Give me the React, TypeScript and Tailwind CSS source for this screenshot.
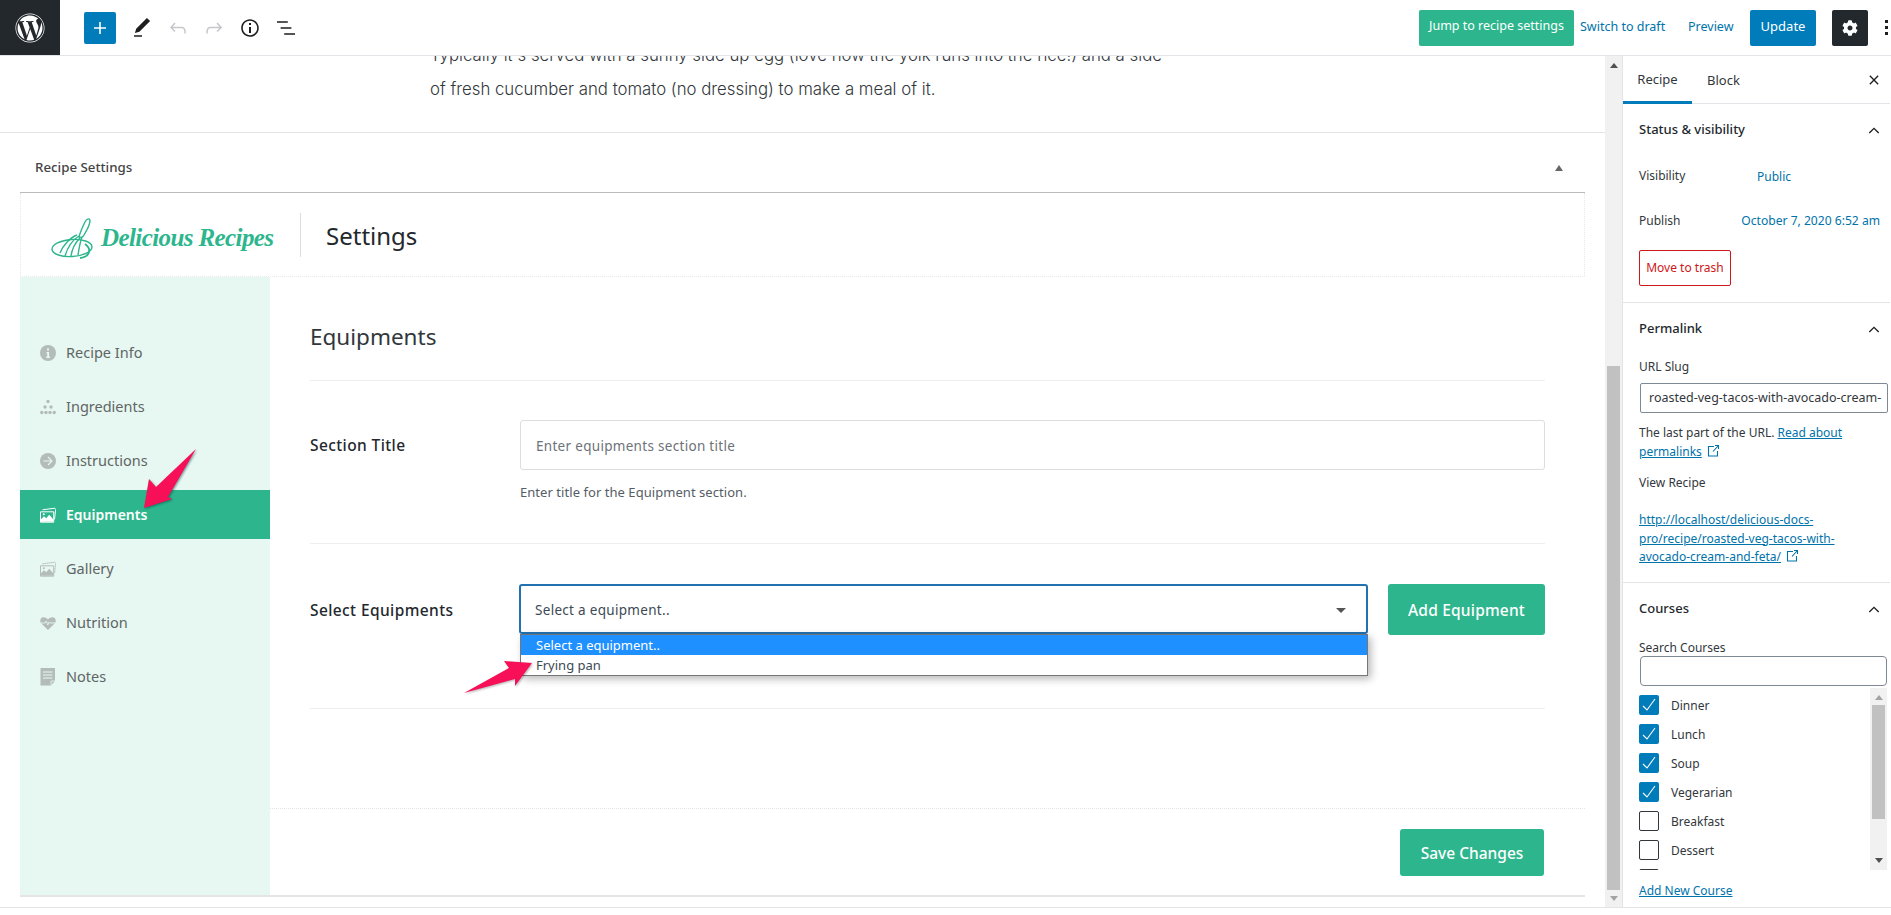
import { FaWordpress, FaCog } from 'react-icons/fa';

const uiFont = "font-['Noto_Sans','Open_Sans',sans-serif]";

function WpIcon({ d, className }: { d: string; className?: string }) {
  return (
    <svg viewBox="0 0 24 24" width="24" height="24" fill="currentColor" className={className}>
      <path d={d} />
    </svg>
  );
}

function ChevronUp() {
  return (
    <svg viewBox="0 0 14 8" width="12" height="7" fill="none" stroke="#1e1e1e" strokeWidth="1.6">
      <path d="M1.5 7 7 1.5 12.5 7" />
    </svg>
  );
}

function ExternalIcon() {
  return (
    <svg viewBox="0 0 14 14" width="14" height="14" fill="none" stroke="#0073aa" strokeWidth="1.1" className="inline-block ml-1 -mt-1">
      <path d="M8 2.5H2.5v9.5h9V7M7 7.5 12.5 1.5M9 1.5h3.5V5" />
    </svg>
  );
}

function NavIcon({ name, active }: { name: string; active?: boolean }) {
  const c = active ? '#ffffff' : '#b4bcb9';
  const bg = active ? '#2db68d' : '#e7f7f2';
  if (name === 'info')
    return (
      <svg viewBox="0 0 16 16" width="16" height="16">
        <circle cx="8" cy="8" r="8" fill={c} />
        <path d="M7 3.5h2v2H7zM6.5 7h2.6v4.6h.8V13H6.3v-1.4h.9V8.3h-.7z" fill={bg} />
      </svg>
    );
  if (name === 'dots')
    return (
      <svg viewBox="0 0 16 16" width="16" height="16" fill={c}>
        <circle cx="8" cy="2.5" r="1.7" />
        <circle cx="5" cy="8" r="1.7" />
        <circle cx="11" cy="8" r="1.7" />
        <circle cx="1.8" cy="13.5" r="1.7" />
        <circle cx="6" cy="13.5" r="1.7" />
        <circle cx="10" cy="13.5" r="1.7" />
        <circle cx="14.2" cy="13.5" r="1.7" />
      </svg>
    );
  if (name === 'arrow')
    return (
      <svg viewBox="0 0 16 16" width="16" height="16">
        <circle cx="8" cy="8" r="8" fill={c} />
        <path d="M3.5 8h8M8 4l4 4-4 4" fill="none" stroke={bg} strokeWidth="1.1" />
      </svg>
    );
  if (name === 'photo')
    return (
      <svg viewBox="0 0 16 16" width="16" height="16">
        <path d="M2.5 2.8 14.8 1.2l.9 1.2-1.2 10" fill="none" stroke={c} strokeWidth="1" strokeDasharray={active ? undefined : '1.5 .5'} />
        <path d="M.5 4.8h13.2v10.4H.5z" fill="none" stroke={c} strokeWidth="1" />
        <path d="M1 14.8v-2.6l3-3 2.2 2 3-3.4 4 4.5v2.5z" fill={c} />
        <circle cx="3.8" cy="7.2" r="1" fill={c} />
      </svg>
    );
  if (name === 'heart')
    return (
      <svg viewBox="0 0 16 16" width="16" height="16">
        <path d="M8 15 1.2 8.2C-.6 6.3.1 2.2 3.6 2.2 5.7 2.2 7.2 3.3 8 4.6c.8-1.3 2.3-2.4 4.4-2.4 3.5 0 4.2 4.1 2.4 6z" fill={c} />
        <path d="M1 8h4l1.2-2 1.6 4 1.4-3 .8 1h5" fill="none" stroke={bg} strokeWidth=".9" />
      </svg>
    );
  return (
    <svg viewBox="0 0 16 18" width="16" height="18">
      <path d="M.5 0h14.5v13l-4 4.5H.5z" fill={c} />
      <path d="M3 4h9.5M3 7h9.5M3 10h9.5" stroke={bg} strokeWidth="1" />
      <path d="M11 17v-4h4" fill="none" stroke={bg} strokeWidth=".8" />
    </svg>
  );
}

const navItems = [
  { label: 'Recipe Info', icon: 'info' },
  { label: 'Ingredients', icon: 'dots' },
  { label: 'Instructions', icon: 'arrow' },
  { label: 'Equipments', icon: 'photo', active: true },
  { label: 'Gallery', icon: 'photo' },
  { label: 'Nutrition', icon: 'heart' },
  { label: 'Notes', icon: 'note' },
];

const courses = [
  { label: 'Dinner', on: true },
  { label: 'Lunch', on: true },
  { label: 'Soup', on: true },
  { label: 'Vegerarian', on: true },
  { label: 'Breakfast', on: false },
  { label: 'Dessert', on: false },
  { label: '', on: false },
];

function TopBar() {
  return (
    <div className="h-[56px] shrink-0 flex items-center border-b border-[#e2e4e7] bg-white">
      <div className="w-[60px] h-[55px] bg-[#23282d] flex items-center justify-center text-white">
        <FaWordpress size={30} />
      </div>
      <div className="w-[32px] h-[32px] ml-[24px] rounded-[2px] bg-[#007cba] text-white flex items-center justify-center">
        <WpIcon d="M18 11.2h-5.2V6h-1.6v5.2H6v1.6h5.2V18h1.6v-5.2H18z" />
      </div>
      <div className="flex items-center ml-[14px] gap-[12px] text-[#1e1e1e]">
        <WpIcon d="M20.1 5.1L16.9 2 6.2 12.7l-1.3 4.4 4.5-1.3L20.1 5.1zM4 20.8h8v-1.5H4v1.5z" />
        <WpIcon className="text-[#c5c7ca]" d="M18.3 11.7c-.6-.6-1.4-.9-2.3-.9H6.7l2.9-3.3-1.1-1-4.5 5L8.5 16l1-1-2.7-2.7H16c.5 0 .9.2 1.3.5 1 1 1 3.4 1 4.5v.3h1.5v-.2c0-1.5 0-4.3-1.5-5.7z" />
        <WpIcon className="text-[#c5c7ca]" d="M15.6 6.5l-1.1 1 2.9 3.3H8c-.9 0-1.7.3-2.3.9-1.4 1.5-1.4 4.2-1.4 5.6v.2h1.5v-.3c0-1.1 0-3.5 1-4.5.3-.3.7-.5 1.3-.5h9.2L14.5 15l1.1 1.1 4.6-4.6-4.6-5z" />
        <WpIcon d="M12 3.2c-4.8 0-8.8 3.9-8.8 8.8 0 4.8 3.9 8.8 8.8 8.8 4.8 0 8.8-3.9 8.8-8.8 0-4.8-4-8.8-8.8-8.8zm0 16c-4 0-7.2-3.3-7.2-7.2C4.8 8 8 4.8 12 4.8s7.2 3.3 7.2 7.2c0 4-3.2 7.2-7.2 7.2zM11 17h2v-6h-2v6zm0-8h2V7h-2v2z" />
        <WpIcon d="M13.8 5.2H3v1.5h10.8V5.2zm-3.6 12v1.5H21v-1.5H10.2zm7.2-6H6.6v1.5h10.8v-1.5z" />
      </div>
      <div className="ml-auto flex items-center text-[12.5px]">
        <div className="w-[155px] h-[36px] pb-[2px] rounded-[2px] bg-[#2db68d] text-white flex items-center justify-center">Jump to recipe settings</div>
        <div className="w-[114px] pl-[6px] text-[#0073aa]">Switch to draft</div>
        <div className="w-[62px] text-[#0073aa]">Preview</div>
        <div className="w-[66px] h-[36px] pb-[2px] rounded-[2px] bg-[#007cba] text-white text-[13px] flex items-center justify-center">Update</div>
        <div className="w-[36px] h-[36px] ml-[16px] rounded-[2px] bg-[#23282d] text-white flex items-center justify-center">
          <FaCog size={16} />
        </div>
        <div className="w-[23px] flex flex-col items-center gap-[3px] pl-[13px]">
          <span className="w-[3px] h-[3px] bg-[#1e1e1e]" />
          <span className="w-[3px] h-[3px] bg-[#1e1e1e]" />
          <span className="w-[3px] h-[3px] bg-[#1e1e1e]" />
        </div>
      </div>
    </div>
  );
}

function Logo() {
  return (
    <div className="flex items-center w-[279px] pl-[30px] pt-[4px]">
      <svg viewBox="0 0 42 44" width="42" height="44" fill="none" stroke="#2db68d" strokeWidth="1.4" className="shrink-0">
        <path d="M28 22c1-4 3-9 6-15 2-4 5-4 5-1 0 3-3 9-6 14-1 2-3 3-5 2z" />
        <path d="M28 21c-5 3-11 10-14 20M29 23c-4 4-8 11-9 18M31 22c-2 5-3 12-4 18M26 20c-6 2-14 10-17 18" />
        <ellipse cx="21" cy="33" rx="20" ry="8.5" transform="rotate(-4 21 33)" />
        <path d="M34 29c7 5 5 13-5 14" strokeWidth="1.8" />
      </svg>
      <span className="ml-[8px] mt-[3px] text-[25px] font-bold italic tracking-[-0.6px] whitespace-nowrap text-[#2db68d] font-['Liberation_Serif',serif]">Delicious Recipes</span>
    </div>
  );
}

function EquipmentsPanel() {
  return (
    <div className="flex-1 min-w-0 flex flex-col justify-between text-[#444]">
      <div className="px-[40px]">
        <div className="h-[104px] pt-[43px] border-b border-[#eeeeee] text-[22.5px] leading-[34px] text-[#32373c]">Equipments</div>
        <div className="h-[163px] pt-[39px] border-b border-[#eeeeee]">
          <div className="flex items-center">
            <div className="w-[210px] pt-[2px] text-[15.5px] font-medium tracking-[.4px] text-[#23282d]">Section Title</div>
            <div className="w-[1025px] h-[50px] pt-[2px] rounded-[3px] border border-[#dddddd] flex items-center pl-[15px] text-[13.5px] tracking-[.3px] text-[#6c7278]">Enter equipments section title</div>
          </div>
          <div className="ml-[210px] mt-[12px] text-[13px] tracking-[.05px] leading-[20px] text-[#555d66]">Enter title for the Equipment section.</div>
        </div>
        <div className="h-[165px] pt-[40px] border-b border-[#eeeeee]">
          <div className="flex items-start">
            <div className="w-[209px] h-[50px] pt-[4px] flex items-center text-[15.5px] font-medium tracking-[.4px] whitespace-nowrap text-[#23282d]">Select Equipments</div>
            <div className="relative w-[849px] h-[50px] pt-[2px] rounded-[3px] border-2 border-[#2271b1] flex items-center pl-[14px] text-[13.5px] tracking-[.3px] text-[#3c4a55]">
              Select a equipment..
              <span className="absolute right-[20px] top-[22px] w-0 h-0 border-x-[5px] border-x-transparent border-t-[5px] border-t-[#555]" />
              <div className="absolute left-[-1px] top-[48px] w-[848px] h-[42px] bg-white border border-[#767676] shadow-[3px_3px_8px_rgba(0,0,0,0.28)] text-[13px] tracking-normal z-10">
                <div className="h-[20px] pl-[15px] leading-[20px] bg-[#1e90ff] text-white">Select a equipment..</div>
                <div className="h-[20px] pl-[15px] leading-[20px] text-[#3c4a55]">Frying pan</div>
              </div>
            </div>
            <div className="w-[157px] h-[51px] pt-[2px] ml-[20px] rounded-[3px] bg-[#2db68d] text-white text-[15.5px] font-medium tracking-[.2px] flex items-center justify-center">Add Equipment</div>
          </div>
        </div>
      </div>
      <div className="h-[87px] border-t border-dotted border-[#e5e5e5] flex justify-end pt-[20px] pr-[41px]">
        <div className="w-[144px] h-[47px] pt-[2px] rounded-[3px] bg-[#2db68d] text-white text-[15.5px] font-medium flex items-center justify-center">Save Changes</div>
      </div>
    </div>
  );
}

function EditorColumn() {
  return (
    <div className="w-[1605px] h-full overflow-hidden">
      <div className="h-[77px] border-b border-[#e2e4e7] overflow-hidden">
        <div className="-mt-[18px] pl-[430px] text-[16.8px] leading-[34px] whitespace-nowrap text-[#32373c] font-['Inter',sans-serif] font-light">
          <div>Typically it's served with a sunny side up egg (love how the yolk runs into the rice!) and a side</div>
          <div>of fresh cucumber and tomato (no dressing) to make a meal of it.</div>
        </div>
      </div>
      <div className="ml-[20px] w-[1565px]">
        <div className="h-[60px] border-b border-[#bbbbbb] flex items-center justify-between pt-[11px] pl-[15px] pr-[22px] text-[13.3px] font-medium text-[#444]">
          <span>Recipe Settings</span>
          <span className="w-0 h-0 border-x-[4px] border-x-transparent border-b-[6px] border-b-[#666]" />
        </div>
        <div className="h-[84px] border-x border-b border-dotted border-[#e8e8e8] flex items-center">
          <Logo />
          <div className="w-px h-[44px] bg-[#dddddd]" />
          <div className="ml-[25px] pt-[2px] text-[24px] text-[#23282d]">Settings</div>
        </div>
        <div className="h-[620px] flex border-b-2 border-[#e5e5e5]">
          <div className="w-[250px] shrink-0 bg-[#e7f7f2] pt-[51px] flex flex-col gap-[5px]">
            {navItems.map((item) => (
              <div
                key={item.label}
                className={
                  item.active
                    ? 'h-[49px] flex items-center pl-[20px] gap-[10px] bg-[#2db68d] text-white text-[14px] font-semibold'
                    : 'h-[49px] flex items-center pl-[20px] gap-[10px] text-[#5f6664] text-[14.5px]'
                }
              >
                <NavIcon name={item.icon} active={item.active} />
                {item.label}
              </div>
            ))}
          </div>
          <EquipmentsPanel />
        </div>
      </div>
    </div>
  );
}

function PageScrollbar() {
  return (
    <div className="relative w-[17px] h-full bg-[#f1f1f1]">
      <span className="absolute left-[5px] top-[7px] w-0 h-0 border-x-[4px] border-x-transparent border-b-[5px] border-b-[#505050]" />
      <div className="absolute left-[2px] top-[310px] w-[13px] h-[524px] bg-[#c1c1c1]" />
      <span className="absolute left-[5px] bottom-[6px] w-0 h-0 border-x-[4px] border-x-transparent border-t-[5px] border-t-[#a3a3a3]" />
    </div>
  );
}

function Sidebar() {
  return (
    <div className="w-[268px] h-full border-l border-[#e2e4e7] text-[12px] text-[#32373c] overflow-hidden">
      <div className="h-[48px] border-b border-[#e2e4e7] flex items-stretch text-[13px]">
        <div className="w-[69px] pt-[2px] border-b-[3px] border-[#007cba] -mb-px flex items-center justify-center text-[#32373c]">Recipe</div>
        <div className="ml-[15px] pt-[2px] flex items-center text-[#32373c]">Block</div>
        <div className="ml-auto mr-[11px] flex items-center">
          <svg viewBox="0 0 12 12" width="10" height="10" stroke="#1e1e1e" strokeWidth="1.6">
            <path d="M1 1l10 10M11 1 1 11" />
          </svg>
        </div>
      </div>

      <div className="h-[199px] border-b border-[#e2e4e7] pl-[16px] pr-[10px]">
        <div className="h-[52px] flex items-center justify-between text-[13px] font-medium text-[#23282d]">
          Status &amp; visibility
          <ChevronUp />
        </div>
        <div className="h-[20px] mt-[10px] flex items-center">
          <span className="w-[118px]">Visibility</span>
          <span className="text-[#0073aa] pt-[2px]">Public</span>
        </div>
        <div className="h-[20px] mt-[25px] flex items-center justify-between">
          <span>Publish</span>
          <span className="text-[#0073aa] text-[12.1px]">October 7, 2020 6:52 am</span>
        </div>
        <div className="w-[92px] h-[36px] mt-[19px] rounded-[2px] border border-[#cc1818] text-[#cc1818] flex items-center justify-center">Move to trash</div>
      </div>

      <div className="h-[280px] border-b border-[#e2e4e7] pl-[16px] pr-[2px]">
        <div className="h-[52px] flex items-center justify-between pr-[8px] text-[13px] font-medium text-[#23282d]">
          Permalink
          <ChevronUp />
        </div>
        <div className="leading-[18px] mt-[3px]">URL Slug</div>
        <div className="h-[30px] w-[248px] ml-px mt-[7px] rounded-[2px] border border-[#7e8993] flex items-center pl-[8px] whitespace-nowrap overflow-hidden text-[12.5px]">roasted-veg-tacos-with-avocado-cream-</div>
        <div className="w-[240px] mt-[10px] leading-[19px]">
          The last part of the URL. <span className="text-[#0073aa] underline">Read about permalinks</span>
          <ExternalIcon />
        </div>
        <div className="mt-[13px] leading-[18px]">View Recipe</div>
        <div className="w-[240px] mt-[19px] leading-[18.5px] text-[#0073aa] underline">
          http://localhost/delicious-docs-pro/recipe/roasted-veg-tacos-with-avocado-cream-and-feta/
          <ExternalIcon />
        </div>
      </div>

      <div className="pl-[16px] pr-[4px]">
        <div className="h-[52px] flex items-center justify-between pr-[6px] text-[13px] font-medium text-[#23282d]">
          Courses
          <ChevronUp />
        </div>
        <div className="leading-[16px] mt-[5px]">Search Courses</div>
        <div className="w-[247px] h-[30px] ml-px rounded-[4px] border border-[#7e8993]" />
        <div className="relative w-[248px] h-[182px] mt-[2px] overflow-hidden">
          <div className="pt-[7px] flex flex-col gap-[9px]">
            {courses.map((course, i) => (
              <div key={i} className="flex items-center h-[20px]">
                <div
                  className={
                    course.on
                      ? 'w-[20px] h-[20px] rounded-[2px] bg-[#007cba] flex items-center justify-center'
                      : 'w-[20px] h-[20px] rounded-[2px] border border-[#32373c] bg-white'
                  }
                >
                  {course.on && (
                    <svg viewBox="0 0 16 16" width="16" height="16" fill="none" stroke="white" strokeWidth="1.1">
                      <path d="M2 9l4 4 8-11" />
                    </svg>
                  )}
                </div>
                <span className="ml-[12px] pt-px">{course.label}</span>
              </div>
            ))}
          </div>
          <div className="absolute right-0 top-0 w-[17px] h-full bg-[#f1f1f1]">
            <span className="absolute left-[5px] top-[7px] w-0 h-0 border-x-[4px] border-x-transparent border-b-[5px] border-b-[#a3a3a3]" />
            <div className="absolute left-[2px] top-[17px] w-[13px] h-[114px] bg-[#c1c1c1]" />
            <span className="absolute left-[5px] bottom-[7px] w-0 h-0 border-x-[4px] border-x-transparent border-t-[5px] border-t-[#505050]" />
          </div>
        </div>
        <div className="mt-[12px] leading-[18px] text-[#0073aa] underline">Add New Course</div>
      </div>
    </div>
  );
}

function Arrows() {
  return (
    <>
      <svg className="absolute left-[140px] top-[445px] z-20 drop-shadow-[1px_1px_1px_rgba(0,60,60,0.5)]" width="60" height="68" viewBox="140 445 60 68">
        <polygon points="196,449 168,497 172,499 144,508 149,479 156,487" fill="#f70f57" />
      </svg>
      <svg className="absolute left-[460px] top-[655px] z-20 drop-shadow-[1px_1px_1px_rgba(0,0,0,0.3)]" width="76" height="42" viewBox="460 655 76 42">
        <polygon points="464,693 509,668 504,661 532,663 515,686 515,679" fill="#f70f57" />
      </svg>
    </>
  );
}

export default function App() {
  return (
    <div className={`relative w-[1891px] h-[915px] overflow-hidden bg-white ${uiFont}`}>
      <TopBar />
      <div className="h-[852px] flex border-b border-[#e2e4e7]">
        <EditorColumn />
        <PageScrollbar />
        <Sidebar />
      </div>
      <Arrows />
    </div>
  );
}
